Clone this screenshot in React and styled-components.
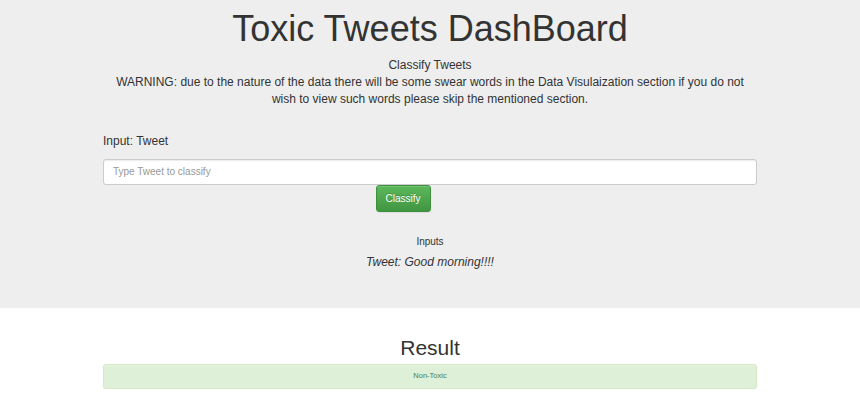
import React from "react";
import styled, { createGlobalStyle } from "styled-components";

const GlobalStyle = createGlobalStyle`
  html, body {
    margin: 0;
    padding: 0;
    background: #fff;
  }
  body {
    font-family: "Liberation Sans", Arial, Helvetica, sans-serif;
    font-size: 12px;
    line-height: 1.428571;
    color: #333;
  }
  * { box-sizing: border-box; }
`;

const Jumbotron = styled.header`
  background: #eeeeee;
  padding: 9px 0 37px;
`;

const Container = styled.div`
  width: 654px;
  margin: 0 auto;
`;

const Title = styled.h1`
  margin: 0;
  font-size: 36px;
  line-height: 40px;
  font-weight: 500;
  text-align: center;
  color: #333;
`;

const Intro = styled.p`
  margin: 8px 0 0;
  text-align: center;
`;

const Form = styled.form`
  margin-top: 25px;
  display: flex;
  flex-direction: column;
`;

const Label = styled.label`
  display: block;
  margin-bottom: 8px;
`;

const TextInput = styled.input`
  display: block;
  width: 100%;
  height: 26px;
  padding: 0 9px;
  font-family: inherit;
  font-size: 10px;
  color: #555;
  background: #fff;
  border: 1px solid #ccc;
  border-radius: 3px;
  box-shadow: inset 0 1px 1px rgba(0, 0, 0, 0.075);
  outline: none;
  &::placeholder { color: #999; }
`;

const ButtonRow = styled.div`
  display: grid;
  grid-template-columns: repeat(12, 1fr);
  margin-top: 0;
`;

const Button = styled.button`
  grid-column: 6 / span 2;
  justify-self: start;
  height: 27px;
  padding: 0 9px;
  font-family: inherit;
  font-size: 10px;
  color: #fff;
  text-shadow: 0 -1px 0 rgba(0, 0, 0, 0.2);
  background: linear-gradient(to bottom, #5cb85c 0%, #419641 100%);
  border: 1px solid #3e8f3e;
  border-radius: 3px;
  box-shadow: inset 0 1px 0 rgba(255, 255, 255, 0.15), 0 1px 1px rgba(0, 0, 0, 0.075);
  cursor: pointer;
`;

const Inputs = styled.div`
  margin-top: 23px;
  text-align: center;
`;

const InputsHeading = styled.div`
  font-size: 10px;
  line-height: 1.428571;
`;

const TweetLine = styled.div`
  margin-top: 5px;
  font-size: 12px;
  font-style: italic;
  line-height: 1.428571;
`;

const ResultSection = styled.section`
  padding-top: 28px;
`;

const ResultTitle = styled.h2`
  margin: 0;
  font-size: 21px;
  line-height: 1.1;
  font-weight: 500;
  text-align: center;
  color: #333;
`;

const Alert = styled.div`
  margin-top: 5px;
  height: 25px;
  display: flex;
  align-items: center;
  justify-content: center;
  font-size: 7.5px;
  color: #4a7d4a;
  background: #dff0d8;
  border: 1px solid #d6e9c6;
  border-radius: 3px;
  box-shadow: inset 0 1px 0 rgba(255, 255, 255, 0.25), 0 1px 2px rgba(0, 0, 0, 0.05);
`;

export default function App() {
  return (
    <>
      <GlobalStyle />
      <Jumbotron>
        <Container>
          <Title>Toxic Tweets DashBoard</Title>
          <Intro>
            Classify Tweets
            <br />
            WARNING: due to the nature of the data there will be some swear words in the Data
            Visulaization section if you do not wish to view such words please skip the mentioned
            section.
          </Intro>
          <Form onSubmit={(e) => e.preventDefault()}>
            <Label htmlFor="tweet">Input: Tweet</Label>
            <TextInput id="tweet" type="text" placeholder="Type Tweet to classify" />
            <ButtonRow>
              <Button type="submit">Classify</Button>
            </ButtonRow>
          </Form>
          <Inputs>
            <InputsHeading>Inputs</InputsHeading>
            <TweetLine>Tweet: Good morning!!!!</TweetLine>
          </Inputs>
        </Container>
      </Jumbotron>
      <ResultSection>
        <Container>
          <ResultTitle>Result</ResultTitle>
          <Alert>Non-Toxic</Alert>
        </Container>
      </ResultSection>
    </>
  );
}
